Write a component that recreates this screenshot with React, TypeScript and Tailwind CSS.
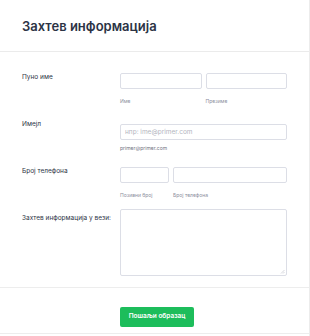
export default function App() {
  return (
    <div
      className="w-[310px] h-[336px] bg-white border-r border-[#ececec] text-[#2c3345] overflow-hidden"
      style={{ fontFamily: 'Inter, "Noto Sans", sans-serif' }}
    >
      {/* Header */}
      <div className="h-[52px] border-b border-[#ebebeb] px-[22px] pt-[18px]">
        <h1 className="text-[13px] leading-[17px] font-semibold">
          Захтев информација
        </h1>
      </div>

      {/* Fields */}
      <div className="px-[22px] pt-[17px]">
        {/* Full name */}
        <div className="flex h-[47px]">
          <label className="w-[98px] text-[6.5px] leading-[16px]">Пуно име</label>
          <div className="flex gap-[4px] flex-1">
            <div className="flex-1">
              <input className="w-full h-[16px] border border-[#dcdee6] rounded-[2px] bg-white" />
              <p className="mt-[5px] text-[5px] leading-[6px] text-[#8b8e9c]">Име</p>
            </div>
            <div className="flex-1">
              <input className="w-full h-[16px] border border-[#dcdee6] rounded-[2px] bg-white" />
              <p className="mt-[5px] text-[5px] leading-[6px] text-[#8b8e9c]">Презиме</p>
            </div>
          </div>
        </div>

        {/* Email */}
        <div className="flex h-[47px]">
          <label className="w-[98px] text-[6.5px] leading-[16px]">Имејл</label>
          <div className="flex-1">
            <input
              placeholder="нпр: ime@primer.com"
              className="w-full h-[16px] border border-[#dcdee6] rounded-[2px] bg-white px-[4px] text-[6.5px] placeholder:text-[#b3b5c0] outline-none"
            />
            <p className="mt-[5px] text-[5px] leading-[6px] text-[#6f7280]">primer@primer.com</p>
          </div>
        </div>

        {/* Phone */}
        <div className="flex h-[46px]">
          <label className="w-[98px] text-[6.5px] leading-[16px]">Број телефона</label>
          <div className="flex gap-[4px] flex-1">
            <div className="w-[49px]">
              <input className="w-full h-[16px] border border-[#dcdee6] rounded-[2px] bg-white" />
              <p className="mt-[5px] text-[5px] leading-[6px] text-[#8b8e9c]">Позивни број</p>
            </div>
            <div className="flex-1">
              <input className="w-full h-[16px] border border-[#dcdee6] rounded-[2px] bg-white" />
              <p className="mt-[5px] text-[5px] leading-[6px] text-[#8b8e9c]">Број телефона</p>
            </div>
          </div>
        </div>

        {/* Request */}
        <div className="flex pb-[11px]">
          <label className="w-[98px] pt-[4px] text-[6.5px] leading-[10px]">
            Захтев информација у вези:
          </label>
          <div className="relative flex-1">
            <textarea className="w-full h-[67px] border border-[#dcdee6] rounded-[2px] bg-white block outline-none resize-none" />
            <svg className="absolute right-[2px] bottom-[2px]" width="5" height="5" viewBox="0 0 5 5">
              <path d="M4.5 1 L1 4.5 M4.5 3 L3 4.5" stroke="#c4c6cf" strokeWidth="0.7" />
            </svg>
          </div>
        </div>
      </div>

      {/* Submit */}
      <div className="border-t border-b border-[#ededed] pt-[12px] h-[47px] pl-[120px]">
        <button className="w-[74px] h-[20px] bg-[#1dbd5b] rounded-[2px] text-white text-[6.5px] font-semibold">
          Пошаљи образац
        </button>
      </div>
    </div>
  )
}
